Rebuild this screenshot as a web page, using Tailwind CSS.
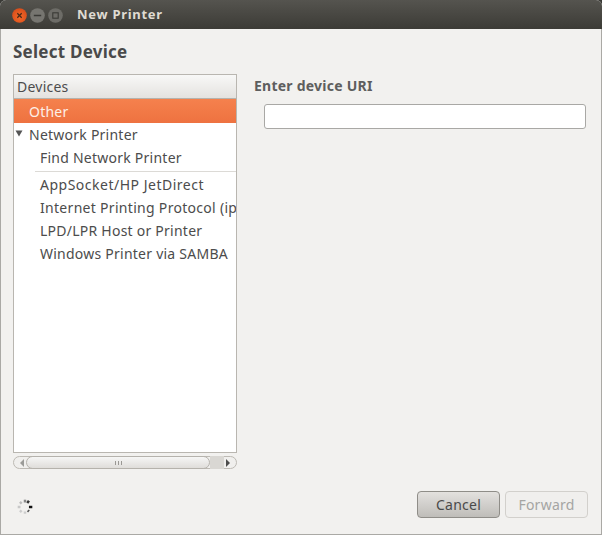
<!DOCTYPE html>
<html><head><meta charset="utf-8"><script src="https://cdn.jsdelivr.net/npm/@tailwindcss/browser@4"></script></head>
<body class="m-0 bg-[#3a3a36]">
<div class="w-[602px] h-[535px] flex flex-col overflow-hidden rounded-t-[6px] font-['Noto_Sans',sans-serif] text-[14px] tracking-[0.24px] text-[#4c4c4c] bg-[#f2f1ef]">
  <div class="h-[29px] shrink-0 flex items-center pl-[12px] pt-[1px] gap-[3px] bg-gradient-to-b from-[#55544f] to-[#3c3b36]">
    <svg width="15" height="15" viewBox="0 0 15 15"><defs><radialGradient id="r" cx="50%" cy="60%" r="60%"><stop offset="0" stop-color="#f46a2a"/><stop offset="1" stop-color="#d94d1a"/></radialGradient></defs><circle cx="7.500" cy="7.500" r="7.300" fill="url(#r)"/><path d="M5.300 5.300l4.400 4.400M9.700 5.300l-4.400 4.400" stroke="#4a2a18" stroke-width="1.300"/></svg>
    <svg width="15" height="15" viewBox="0 0 15 15"><circle cx="7.500" cy="7.500" r="7.300" fill="#767570"/><path d="M3.800 7.500h7.400" stroke="#3a3a36" stroke-width="1.400"/></svg>
    <svg width="15" height="15" viewBox="0 0 15 15"><circle cx="7.500" cy="7.500" r="7.300" fill="#6d6c67"/><rect x="4.800" y="4.800" width="5.400" height="5.400" fill="none" stroke="#3a3a36" stroke-width="1.100"/></svg>
    <span class="ml-[11px] text-[13px] font-bold text-[#dfdbd2] tracking-[0.7px]">New Printer</span>
  </div>
  <div class="flex-1 flex flex-col min-h-0 border-l border-r border-b border-[#aaa9a5] pl-[12px] pr-[14px]">
    <h1 class="h-[45px] shrink-0 flex items-center text-[17px] font-bold text-[#4a4a4a] leading-none pb-[1px]">Select Device</h1>
    <div class="flex flex-1 min-h-0">
      <div class="w-[224px] shrink-0 flex flex-col">
        <div class="h-[379px] border border-[#b9b6b0] bg-white flex flex-col overflow-hidden">
          <div class="h-[24px] shrink-0 flex items-center pl-[3px] bg-gradient-to-b from-[#f8f8f7] to-[#e4e2df] border-b border-[#b5b2ac]">Devices</div>
          <div class="h-[24px] shrink-0 flex items-center pl-[15px] bg-gradient-to-b from-[#f5814d] to-[#ee7240] text-[#fdf0e8]">Other</div>
          <div class="h-[23px] shrink-0 flex items-center relative pl-[15px]"><svg class="absolute left-[1px] top-[7px]" width="8" height="7" viewBox="0 0 8 7"><path d="M0.500 0.500h7L4 6.500z" fill="#555"/></svg>Network Printer</div>
          <div class="h-[23px] shrink-0 flex items-center pl-[26px]">Find Network Printer</div>
          <div class="h-[4px] shrink-0 pl-[21px] flex items-center"><div class="h-px w-full bg-[#dcdad6]"></div></div>
          <div class="h-[23px] shrink-0 flex items-center pl-[26px] tracking-[0.5px]">AppSocket/HP JetDirect</div>
          <div class="h-[23px] shrink-0 flex items-center pl-[26px] whitespace-nowrap tracking-[0.3px]">Internet Printing Protocol (ipp)</div>
          <div class="h-[23px] shrink-0 flex items-center pl-[26px]">LPD/LPR Host or Printer</div>
          <div class="h-[23px] shrink-0 flex items-center pl-[26px]">Windows Printer via SAMBA</div>
        </div>
        <div class="mt-[3px] h-[13px] rounded-full border border-[#bdbab4] bg-[#f0efed] flex items-center relative">
          <svg class="absolute left-[5px] top-[2px]" width="6" height="8" viewBox="0 0 6 8"><path d="M5 0v8L1 4z" fill="#9b9b98"/></svg>
          <div class="absolute right-[12px] -top-px w-[14px] h-[13px] bg-[#d9d7d3]"></div>
          <div class="absolute left-[12px] -top-px w-[184px] h-[13px] rounded-full border border-[#b5b2ac] bg-gradient-to-b from-[#f6f6f5] to-[#dfdddA] flex items-center justify-center gap-[2px]"><i class="block w-px h-[4px] bg-[#9a9894]"></i><i class="block w-px h-[4px] bg-[#9a9894]"></i><i class="block w-px h-[4px] bg-[#9a9894]"></i></div>
          <svg class="absolute right-[5px] top-[2px]" width="6" height="8" viewBox="0 0 6 8"><path d="M1 0v8l4-4z" fill="#4c4c4c"/></svg>
        </div>
      </div>
      <div class="flex-1 flex flex-col pl-[17px] pr-[1px]">
        <div class="h-[24px] flex items-center font-bold text-[#5e5e5e] text-[14px] -mt-[1px]">Enter device URI</div>
        <div class="ml-[10px] mt-[7px] h-[25px] rounded-[3px] border border-[#a9a8a5] bg-white"></div>
      </div>
    </div>
    <div class="h-[57px] shrink-0 flex items-center justify-between pb-[1px]">
      <svg class="ml-[3px] mt-[4px]" width="18" height="18" viewBox="0 0 16 16"><g fill="none" stroke-width="2.200"><path d="M10 4.500l1.500-2" stroke="#333"/><path d="M11.500 8h3" stroke="#111"/><path d="M10.500 11l1 1" stroke="#555"/><path d="M8 12v2" stroke="#ccc"/><path d="M5 11l-1.500 1.500" stroke="#ccc"/><path d="M4 8H1.500" stroke="#c8c8c8"/><path d="M5 5L3.500 3.500" stroke="#bbb"/><path d="M8 4V1.500" stroke="#888"/></g></svg>
      <div class="flex gap-[5px] mb-[1px] -mr-[1px]">
        <button class="w-[83px] h-[27px] rounded-[4px] border border-[#8f8d88] bg-gradient-to-b from-[#e3e1de] to-[#bfbdb9] text-[#4a4a4a] text-[14px]">Cancel</button>
        <button class="w-[83px] h-[27px] rounded-[4px] border border-[#d2d0cc] bg-[#f0efed] text-[#a5a5a3] text-[14px]">Forward</button>
      </div>
    </div>
  </div>
</div>
</body></html>
